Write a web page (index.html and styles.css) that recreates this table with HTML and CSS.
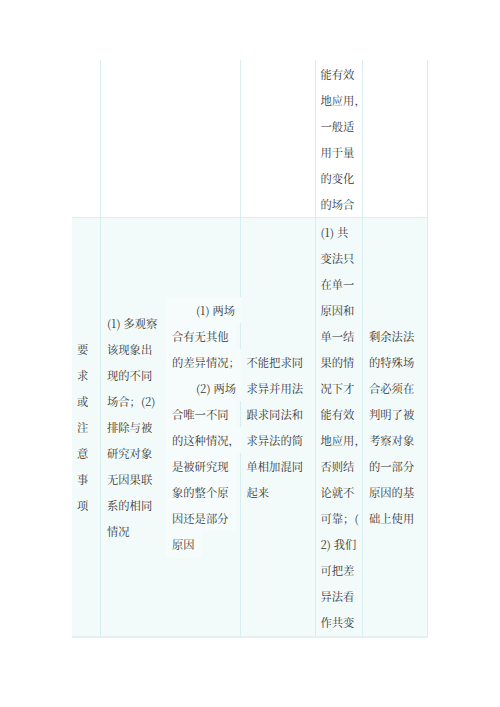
FILE: index.html
```html
<!DOCTYPE html>
<html lang="zh">
<head>
<meta charset="utf-8">
<title>求因果联系方法</title>
<link rel="stylesheet" href="styles.css">
</head>
<body>
<div class="sheet">
  <div class="grid">
    <div class="cell r1 c1"></div>
    <div class="cell r1 c2"></div>
    <div class="cell r1 c3"></div>
    <div class="cell r1 c4"></div>
    <div class="cell r1 c5 bottom">能有效<br>地应用，<br>一般适<br>用于量<br>的变化<br>的场合</div>
    <div class="cell r1 c6"></div>

    <div class="cell r2 c1">要<br>求<br>或<br>注<br>意<br>事<br>项</div>
    <div class="cell r2 c2">(1) 多观察<br>该现象出<br>现的不同<br>场合；(2)<br>排除与被<br>研究对象<br>无因果联<br>系的相同<br>情况</div>
    <div class="cell r2 c3">
      <div class="ln ind">(1) 两场</div>
      <div class="ln">合有无其他</div>
      <div class="ln">的差异情况；</div>
      <div class="ln ind">(2) 两场</div>
      <div class="ln">合唯一不同</div>
      <div class="ln">的这种情况，</div>
      <div class="ln">是被研究现</div>
      <div class="ln">象的整个原</div>
      <div class="ln">因还是部分</div>
      <div class="ln">原因</div>
    </div>
    <div class="cell r2 c4">不能把求同<br>求异并用法<br>跟求同法和<br>求异法的简<br>单相加混同<br>起来</div>
    <div class="cell r2 c5 full">(1) 共<br>变法只<br>在单一<br>原因和<br>单一结<br>果的情<br>况下才<br>能有效<br>地应用，<br>否则结<br>论就不<br>可靠；(<br>2) 我们<br>可把差<br>异法看<br>作共变</div>
    <div class="cell r2 c6">剩余法法<br>的特殊场<br>合必须在<br>判明了被<br>考察对象<br>的一部分<br>原因的基<br>础上使用</div>
  </div>
</div>
</body>
</html>
```

FILE: styles.css
```css
html, body {
  margin: 0;
  padding: 0;
  background: #ffffff;
}

body {
  width: 500px;
  height: 707px;
  overflow: hidden;
  font-family: "Noto Serif CJK SC", "Noto Sans CJK SC", "Noto Sans", sans-serif;
  font-size: 11.3px;
  line-height: 26px;
  color: #363636;
}

.sheet {
  padding: 60px 0 0 72px;
}

.grid {
  display: grid;
  grid-template-columns: 29px 64px 75.5px 75px 47.5px 65px;
  grid-template-rows: 158px 420px;
}

.cell {
  box-sizing: border-box;
  white-space: nowrap;
  border-right: 1px solid #d9efef;
  border-bottom: 1px solid #d9efef;
  padding: 0 0 0 6px;
  display: flex;
  flex-direction: column;
  justify-content: center;
}

.r1 {
  background: #ffffff;
}

.r2 {
  background: #f3fafa;
  border-bottom-color: #e3f1f1;
  border-bottom-width: 2px;
}

.c1 {
  padding-left: 5px;
}

.c2 {
  border-right: none;
  padding-left: 6px;
}

.c3 {
  padding-left: 0;
  align-items: flex-start;
}

.ln {
  width: fit-content;
  background: #f6fbfb;
  padding: 0 7px;
  height: 26px;
}

.ln.ind {
  padding-left: 31px;
}

.c5 {
  padding-left: 5px;
}

.bottom {
  justify-content: flex-end;
  padding-bottom: 0;
}

.full {
  justify-content: flex-start;
  padding-top: 1px;
}
```
